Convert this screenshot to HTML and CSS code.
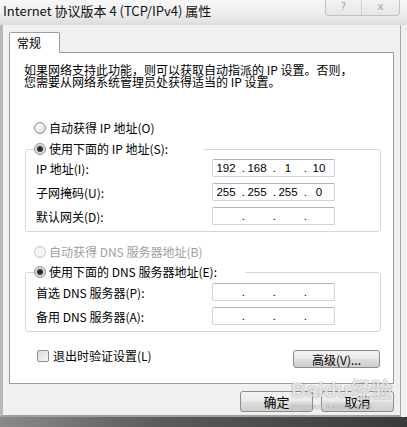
FILE: index.html
```html
<!DOCTYPE html>
<html lang="zh-CN">
<head>
    <meta charset="UTF-8">
    <title>Internet 协议版本 4 (TCP/IPv4) 属性</title>
    <link rel="stylesheet" href="styles.css">
</head>
<body>
    <div class="window">
        <div class="titlebar">
            <span class="title">Internet 协议版本 4 (TCP/IPv4) 属性</span>
            <div class="caption-btns">
                <span class="cap">?</span>
                <span class="cap cap-close">x</span>
            </div>
        </div>

        <div class="frame">
            <div class="tabs">
                <div class="tab">常规</div>
            </div>

            <div class="panel">
                <p class="intro">如果网络支持此功能，则可以获取自动指派的 IP 设置。否则，<br>您需要从网络系统管理员处获得适当的 IP 设置。</p>

                <div class="option option-first"><span class="radio"></span>自动获得 IP 地址(O)</div>
                <fieldset class="group">
                    <legend class="option legend-ip"><span class="radio on"></span>使用下面的 IP 地址(S):</legend>
                    <div class="row">
                        <span>IP 地址(I):</span>
                        <div class="ipbox"><span class="f">192</span><span class="d">.</span><span class="f">168</span><span class="d">.</span><span class="f">1</span><span class="d">.</span><span class="f">10</span></div>
                    </div>
                    <div class="row">
                        <span>子网掩码(U):</span>
                        <div class="ipbox"><span class="f">255</span><span class="d">.</span><span class="f">255</span><span class="d">.</span><span class="f">255</span><span class="d">.</span><span class="f">0</span></div>
                    </div>
                    <div class="row">
                        <span>默认网关(D):</span>
                        <div class="ipbox"><span class="f"></span><span class="d">.</span><span class="f"></span><span class="d">.</span><span class="f"></span><span class="d">.</span><span class="f"></span></div>
                    </div>
                </fieldset>

                <div class="option option-disabled"><span class="radio"></span>自动获得 DNS 服务器地址(B)</div>
                <fieldset class="group group-dns">
                    <legend class="option legend-dns"><span class="radio on"></span>使用下面的 DNS 服务器地址(E):</legend>
                    <div class="row">
                        <span>首选 DNS 服务器(P):</span>
                        <div class="ipbox"><span class="f"></span><span class="d">.</span><span class="f"></span><span class="d">.</span><span class="f"></span><span class="d">.</span><span class="f"></span></div>
                    </div>
                    <div class="row">
                        <span>备用 DNS 服务器(A):</span>
                        <div class="ipbox"><span class="f"></span><span class="d">.</span><span class="f"></span><span class="d">.</span><span class="f"></span><span class="d">.</span><span class="f"></span></div>
                    </div>
                </fieldset>

                <div class="panel-footer">
                    <div class="check-row"><span class="checkbox"></span>退出时验证设置(L)</div>
                    <button class="button button-adv">高级(V)...</button>
                </div>
            </div>

            <div class="actions">
                <button class="button">确定</button>
                <button class="button">取消</button>
            </div>
        </div>

        <div class="taskbar"></div>

        <!-- watermark sits over the buttons -->
        <div class="watermark">Bai<span class="paw">du</span>经验<small>jingyan.baidu.com</small></div>
    </div>
</body>
</html>
```

FILE: styles.css
```css
body {
    margin: 0;
    background-color: #eef0f2;
    font-family: "Noto Sans CJK SC", sans-serif;
    font-size: 12px;
    color: #000;
}
.window {
    position: relative;
    width: 407px;
    height: 427px;
    overflow: hidden;
}
.titlebar {
    height: 25px;
    padding-left: 3px;
    display: flex;
    justify-content: space-between;
    align-items: flex-start;
    background: linear-gradient(#f7f7f7, #eeeeee 55%, #dcdcdc);
}
.title {
    margin-top: 3px;
    font-size: 13px;
    line-height: 16px;
    color: #111;
}
.caption-btns {
    display: flex;
    margin-right: 7px;
    margin-top: -1px;
    height: 16px;
    border: 1px solid #c2c2c2;
    border-top: none;
    border-radius: 0 0 4px 4px;
    background: linear-gradient(#f4f4f4, #e6e6e6);
}
.cap {
    width: 35px;
    text-align: center;
    font-family: "DejaVu Sans", sans-serif;
    font-size: 11px;
    line-height: 15px;
    color: #a8a8a8;
}
.cap-close {
    width: 37px;
    border-left: 1px solid #cfcfcf;
}
.frame {
    width: 401px;
    box-sizing: border-box;
    padding: 7px 6px 3px 6px;
    background-color: #f0f0f0;
    border-left: 3px solid #b8b8b8;
    border-right: 1px solid #a8a8a8;
    border-bottom: 2px solid #a0a0a0;
}
.tabs {
    display: flex;
}
.tab {
    position: relative;
    z-index: 1;
    width: 51px;
    height: 21px;
    box-sizing: border-box;
    margin-bottom: -1px;
    padding-left: 7px;
    border: 1px solid #9c9c9c;
    border-bottom: none;
    border-radius: 2px 2px 0 0;
    background-color: #fff;
    line-height: 19px;
}
.panel {
    height: 332px;
    box-sizing: border-box;
    padding: 11px 12px 0 15px;
    border: 1px solid #9c9c9c;
    background-color: #fff;
}
.intro {
    margin: 0 0 0 -1px;
    line-height: 12px;
    white-space: nowrap;
}
.option {
    display: flex;
    align-items: center;
    gap: 3px;
    height: 14px;
    line-height: 14px;
    white-space: nowrap;
}
.option-first {
    margin: 33px 0 0 9px;
}
.option-disabled {
    margin: 13px 0 0 9px;
    color: #a0a0a0;
}
.radio {
    width: 12px;
    height: 12px;
    box-sizing: border-box;
    border-radius: 50%;
    border: 1px solid #929292;
    background: radial-gradient(circle at 40% 35%, #ffffff, #e4e4e4 60%, #cfcfcf);
    flex-shrink: 0;
}
.radio.on {
    background: radial-gradient(circle at 50% 50%, #1a1a1a 0, #3c3c3c 2.5px, #d6d6d6 3.6px, #f2f2f2 100%);
}
.option-disabled .radio {
    border-color: #c8c8c8;
    background: #f4f4f4;
}
.group {
    width: 356px;
    box-sizing: border-box;
    margin: 7px 0 0 0;
    padding: 3px 0 6px 10px;
    border: 1px solid #d4d8dc;
    border-radius: 3px;
    min-inline-size: 0;
}
.group-dns {
    margin-top: 6px;
    padding-top: 4px;
}
.group legend {
    padding: 0;
    margin-left: -2px;
}
.legend-ip {
    width: 170px;
}
.legend-dns {
    width: 211px;
}
.row {
    display: grid;
    grid-template-columns: 176px 123px;
    align-items: center;
    height: 18px;
    white-space: nowrap;
}
.row + .row {
    margin-top: 6px;
}
.ipbox {
    display: flex;
    height: 18px;
    box-sizing: border-box;
    padding-left: 1px;
    border: 1px solid #d0d4d8;
    border-top-color: #b0b4b8;
    border-radius: 2px;
    font-family: "Liberation Sans", sans-serif;
    font-size: 11.5px;
    line-height: 16px;
}
.ipbox .f {
    width: 24px;
    text-align: center;
}
.ipbox .d {
    width: 7px;
    text-align: right;
}
.panel-footer {
    width: 356px;
    box-sizing: border-box;
    margin-top: 18px;
    padding: 0 1px 0 12px;
    display: flex;
    justify-content: space-between;
    align-items: flex-start;
}
.check-row {
    display: flex;
    align-items: center;
    gap: 4px;
    line-height: 12px;
    height: 12px;
}
.checkbox {
    width: 12px;
    height: 12px;
    box-sizing: border-box;
    border: 1px solid #8f8f8f;
    border-radius: 2px;
    background: linear-gradient(135deg, #d9d9d9, #f7f7f7);
}
.button {
    width: 73px;
    height: 21px;
    padding: 0;
    border: 1px solid #8c8c8c;
    border-radius: 3px;
    background: linear-gradient(#f3f3f3 0%, #ebebeb 48%, #dddddd 52%, #cfcfcf 100%);
    font-family: "Noto Sans CJK SC", sans-serif;
    font-size: 13px;
    line-height: 18px;
    color: #000;
}
.button-adv {
    width: 87px;
    height: 18px;
    font-size: 12px;
    line-height: 15px;
}
.actions {
    margin-top: 7px;
    display: flex;
    justify-content: flex-end;
    gap: 8px;
}
.taskbar {
    height: 10px;
    background: linear-gradient(90deg, #8a8a8a, #5a5a5a 40%, #3a3a3a);
}
.watermark {
    position: absolute;
    left: 291px;
    top: 379px;
    font-family: "Liberation Sans", sans-serif;
    font-weight: bold;
    font-size: 21px;
    line-height: 21px;
    color: rgba(255, 255, 255, 0.8);
    text-shadow: 0 0 1px rgba(0, 0, 0, 0.35), 0 0 2px rgba(0, 0, 0, 0.2);
    pointer-events: none;
}
.watermark .paw {
    margin-right: 1px;
}
.watermark small {
    display: block;
    margin-top: 2px;
    font-size: 8px;
    line-height: 9px;
    font-weight: normal;
    letter-spacing: 1px;
    color: rgba(255, 255, 255, 0.7);
}
```
